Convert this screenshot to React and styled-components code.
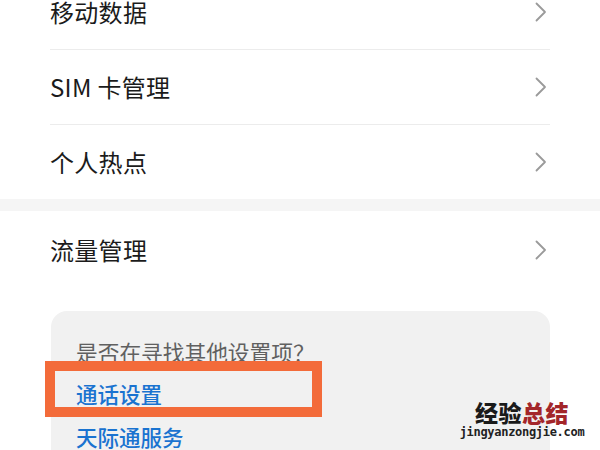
import React from "react";
import styled, { createGlobalStyle } from "styled-components";

const Global = createGlobalStyle`
  html, body { margin: 0; padding: 0; background: #fff; }
  body { font-family: "Noto Sans CJK SC", "Noto Sans", sans-serif; overflow: hidden; }
`;

const Page = styled.div`
  position: relative;
  width: 600px;
  height: 450px;
  overflow: hidden;
  background: #fff;
`;

const List = styled.div`
  margin-top: -25px;
  display: flex;
  flex-direction: column;
`;

const Row = styled.div`
  height: ${(p) => p.$h || 74}px;
  margin: 0 50px;
  display: flex;
  align-items: center;
  justify-content: space-between;
  border-bottom: ${(p) => (p.$last ? "none" : "1px solid #ececec")};
`;

const Label = styled.span`
  font-size: 24px;
  color: #1b1b1b;
  line-height: 1;
  letter-spacing: 0.3px;
`;

const Band = styled.div`
  height: 12px;
  background: #f5f5f5;
`;

const Card = styled.div`
  margin: 22px 50px 0 51px;
  background: #f1f1f1;
  border-radius: 16px;
  padding: 30px 25px 0 25px;
  height: 200px;
  display: flex;
  flex-direction: column;
`;

const Hint = styled.div`
  font-size: 21.7px;
  color: #606060;
  line-height: 22px;
`;

const Link = styled.div`
  position: relative;
  font-size: 21.5px;
  font-weight: 500;
  color: #1a73d0;
  line-height: 22px;
  margin-top: ${(p) => p.$mt}px;
`;

const Highlight = styled.div`
  position: absolute;
  left: -31px;
  top: -22px;
  width: 257px;
  height: 36px;
  border: 10px solid #f36b3a;
`;

const Watermark = styled.div`
  position: absolute;
  left: 456px;
  top: 400px;
  width: 132px;
  display: flex;
  flex-direction: column;
  align-items: center;
`;

const WmTitle = styled.div`
  font-size: 23px;
  font-weight: 900;
  line-height: 24px;
  letter-spacing: 0.5px;
  color: #1a1a1a;
`;

const Red = styled.span`
  color: #a3262a;
`;

const WmUrl = styled.div`
  font-family: "DejaVu Sans Mono", monospace;
  font-size: 12px;
  font-weight: bold;
  color: #222;
  line-height: 14px;
  letter-spacing: -0.3px;
  margin-top: 1px;
`;

const Chevron = () => (
  <svg width="12" height="20" viewBox="0 0 12 20" style={{ marginRight: 3 }}>
    <path d="M1.5 1.5 L10 10 L1.5 18.5" fill="none" stroke="#9a9a9a" strokeWidth="1.8" strokeLinecap="round" strokeLinejoin="round" />
  </svg>
);

export default function App() {
  const rows = ["移动数据", "SIM 卡管理", "个人热点"];
  return (
    <Page>
      <Global />
      <List>
        {rows.map((r, i) => (
          <Row key={r} $last={i === rows.length - 1}>
            <Label>{r}</Label>
            <Chevron />
          </Row>
        ))}
        <Band />
        <Row $last $h={78}>
          <Label>流量管理</Label>
          <Chevron />
        </Row>
        <Card>
          <Hint>是否在寻找其他设置项？</Hint>
          <Link $mt={20}>
            <Highlight />
            通话设置
          </Link>
          <Link $mt={21}>天际通服务</Link>
        </Card>
      </List>
      <Watermark>
        <WmTitle>
          经验<Red>总结</Red>
        </WmTitle>
        <WmUrl>jingyanzongjie.com</WmUrl>
      </Watermark>
    </Page>
  );
}
